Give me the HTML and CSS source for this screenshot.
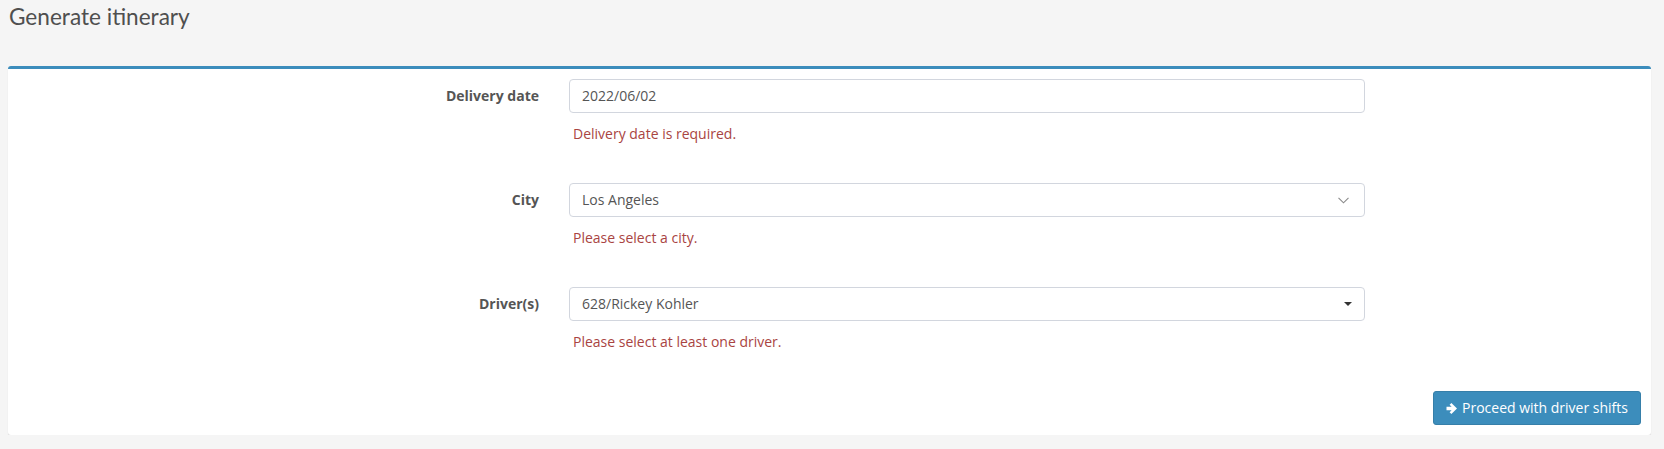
FILE: index.html
```html
<!DOCTYPE html>
<html lang="en">
<head>
<meta charset="utf-8">
<title>Generate itinerary</title>
<link rel="stylesheet" href="styles.css">
</head>
<body>
<div class="page">
  <h1 class="page-title">Generate itinerary</h1>
  <div class="box">
    <div class="box-body">
      <div class="form-group">
        <label class="label-col">Delivery date</label>
        <div class="field-col">
          <div class="control">2022/06/02</div>
          <div class="help">Delivery date is required.</div>
        </div>
      </div>
      <div class="form-group">
        <label class="label-col">City</label>
        <div class="field-col">
          <div class="control control-select">
            <span>Los Angeles</span>
            <svg class="chevron" width="11" height="7" viewBox="0 0 11 7"><path d="M0.5 0.8 L5.5 5.8 L10.5 0.8" fill="none" stroke="#8a8a8a" stroke-width="1.1"/></svg>
          </div>
          <div class="help">Please select a city.</div>
        </div>
      </div>
      <div class="form-group last">
        <label class="label-col">Driver(s)</label>
        <div class="field-col">
          <div class="control control-select">
            <span>628/Rickey Kohler</span>
            <span class="caret"></span>
          </div>
          <div class="help">Please select at least one driver.</div>
        </div>
      </div>
      <div class="actions">
        <button class="btn-primary" type="button">
          <svg class="arrow" width="12" height="13" viewBox="0 0 12 13"><path d="M0.5 4.8 H5.6 L3.6 2.8 L5.4 1 L11 6.5 L5.4 12 L3.6 10.2 L5.6 8.2 H0.5 Z" fill="#fff"/></svg>
          <span>Proceed with driver shifts</span>
        </button>
      </div>
    </div>
  </div>
</div>
</body>
</html>
```

FILE: styles.css
```css
html, body {
  margin: 0;
  padding: 0;
  background: #f5f5f5;
}

body {
  font-family: "Open Sans", "Liberation Sans", sans-serif;
  font-size: 14px;
  color: #333;
}

.page {
  padding: 0 13px 0 8px;
}

.page-title {
  margin: 0;
  padding: 2px 0 0 1px;
  font-family: Lato, "Open Sans", sans-serif;
  font-weight: 400;
  font-size: 22.6px;
  line-height: 30px;
  color: #4f4f4f;
}

.box {
  margin-top: 34px;
  background: #fff;
  border-top: 3px solid #3c8dbc;
  border-radius: 3px;
  box-shadow: 0 1px 1px rgba(0, 0, 0, 0.12);
}

.box-body {
  padding: 10px;
}

.form-group {
  display: flex;
  margin: 0 -15px 39px;
}

.label-col {
  box-sizing: border-box;
  width: 33.3333%;
  padding: 7px 15px 0;
  text-align: right;
  font-weight: 700;
  line-height: 20px;
  color: #555;
}

.field-col {
  box-sizing: border-box;
  width: 50%;
  padding: 0 15px;
}

.control {
  box-sizing: border-box;
  height: 34px;
  padding: 6px 12px;
  border: 1px solid #d2d6de;
  border-radius: 4px;
  line-height: 20px;
  color: #555;
  background: #fff;
}

.control-select {
  display: flex;
  align-items: center;
  justify-content: space-between;
}

.chevron {
  margin-right: 3px;
}

.caret {
  width: 0;
  height: 0;
  margin-right: 0;
  border-top: 4px solid #333;
  border-left: 4px solid transparent;
  border-right: 4px solid transparent;
}

.help {
  margin-top: 11px;
  padding-left: 4px;
  line-height: 20px;
  color: #a94442;
}

.actions {
  display: flex;
  justify-content: flex-end;
}

.btn-primary {
  display: flex;
  align-items: center;
  gap: 4px;
  height: 34px;
  box-sizing: border-box;
  padding: 6px 12px;
  border: 1px solid #367fa9;
  border-radius: 3px;
  background: #3c8dbc;
  color: #fff;
  font-family: "Open Sans", "Liberation Sans", sans-serif;
  font-size: 14px;
  line-height: 20px;
  cursor: pointer;
}

.arrow {
  flex: none;
}
```
